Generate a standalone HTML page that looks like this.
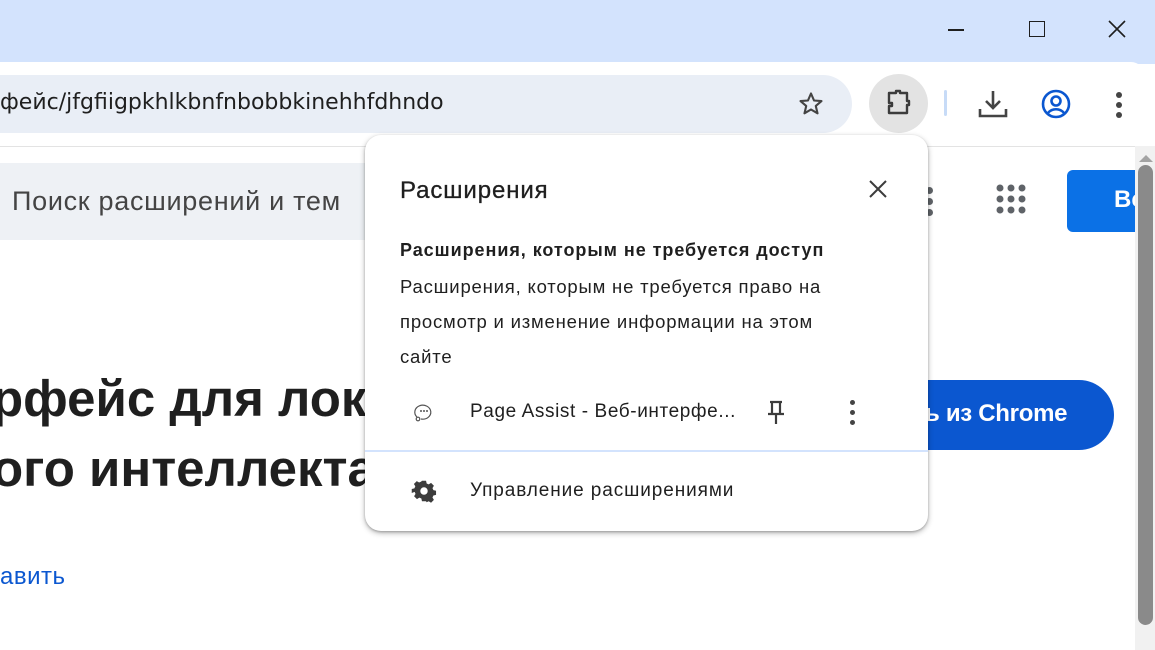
<!DOCTYPE html>
<html><head><meta charset="utf-8"><style>
body{margin:0;width:1155px;height:650px;overflow:hidden;background:#fff;font-family:"Liberation Sans","DejaVu Sans",sans-serif;position:relative}
.a{position:absolute;white-space:nowrap}
</style></head><body>
<div class="a" style="left:0;top:0;width:1155px;height:64px;background:#d3e3fd"></div>
<div class="a" style="left:0;top:62px;width:1145px;height:84px;background:#fff;border-top-right-radius:14px;border-bottom:1px solid #e3e3e3"></div>
<div class="a" style="left:948px;top:29px;width:16px;height:1.5px;background:#1f1f1f"></div>
<div class="a" style="left:1029px;top:21px;width:14px;height:14px;border:1.5px solid #1f1f1f"></div>
<svg class="a" style="left:1107px;top:19px" width="20" height="20"><path d="M2 2L18 18M18 2L2 18" stroke="#1f1f1f" stroke-width="1.6"/></svg>
<div class="a" style="left:-30px;top:75px;width:882px;height:58px;background:#e9eef6;border-radius:29px"></div>
<div class="a" style="left:0;top:90px;font-size:22px;color:#1f1f1f;font-family:'DejaVu Sans',sans-serif;letter-spacing:0px">фейс/jfgfiigpkhlkbnfnbobbkinehhfdhndo</div>
<svg class="a" style="left:797px;top:90px" width="28" height="28" viewBox="0 0 24 24"><path d="M12 3l2.6 6 6.4.5-4.9 4.2 1.5 6.3L12 16.7 6.4 20l1.5-6.3L3 9.5l6.4-.5z" fill="none" stroke="#444" stroke-width="1.8" stroke-linejoin="round"/></svg>
<div class="a" style="left:869px;top:74px;width:59px;height:59px;border-radius:50%;background:#e3e3e3"></div>
<svg class="a" style="left:884px;top:88px" width="30" height="30" viewBox="0 0 30 30"><path d="M5 5h7v-2h4v2h7v8h2v4h-2v8H5v-7h3v-3H5z" fill="none" stroke="#3c3c3c" stroke-width="2.4" stroke-linejoin="round"/></svg>
<div class="a" style="left:944px;top:90px;width:3px;height:26px;background:#c7dbf7;border-radius:2px"></div>
<svg class="a" style="left:977px;top:89px" width="32" height="30" viewBox="0 0 32 30"><path d="M16 2v17M9 12l7 7 7-7M3 20v7h26v-7" fill="none" stroke="#444" stroke-width="2.6"/></svg>
<svg class="a" style="left:1040px;top:88px" width="32" height="32" viewBox="0 0 32 32"><circle cx="16" cy="16" r="13" fill="none" stroke="#0b57d0" stroke-width="2.6"/><circle cx="16" cy="13" r="4.5" fill="none" stroke="#0b57d0" stroke-width="2.6"/><path d="M8 25c4-5 12-5 16 0" fill="none" stroke="#0b57d0" stroke-width="2.6"/></svg>
<div class="a" style="left:1116px;top:92px;width:6px;height:6px;border-radius:50%;background:#444;box-shadow:0 10px 0 #444,0 20px 0 #444"></div>
<div class="a" style="left:0;top:163px;width:380px;height:77px;background:#eef1f5;border-radius:0 8px 8px 0"></div>
<div class="a" style="left:12px;top:186px;font-size:27px;color:#444;letter-spacing:0.7px">Поиск расширений и тем</div>
<div class="a" style="left:926px;top:187px;width:7px;height:7px;border-radius:50%;background:#5f6368;box-shadow:0 11px 0 #5f6368,0 22px 0 #5f6368"></div>
<svg class="a" style="left:995px;top:183px" width="34" height="34"><g fill="#5f6368"><circle cx="5" cy="5" r="3.5"/><circle cx="16" cy="5" r="3.5"/><circle cx="27" cy="5" r="3.5"/><circle cx="5" cy="16" r="3.5"/><circle cx="16" cy="16" r="3.5"/><circle cx="27" cy="16" r="3.5"/><circle cx="5" cy="27" r="3.5"/><circle cx="16" cy="27" r="3.5"/><circle cx="27" cy="27" r="3.5"/></g></svg>
<div class="a" style="left:1067px;top:170px;width:70px;height:62px;background:#0b71e6;border-radius:6px 0 0 6px;overflow:hidden"><span style="position:absolute;left:47px;top:16px;color:#fff;font-weight:bold;font-size:24px">Вс</span></div>
<div class="a" style="left:-8px;top:364px;font-size:51px;font-weight:bold;color:#1f1f1f;line-height:70px">рфейс для локал<br>ого интеллекта</div>
<div class="a" style="left:880px;top:380px;width:234px;height:70px;background:#0b57d0;border-radius:35px"></div>
<div class="a" style="left:925px;top:400px;font-size:24px;color:#fff;font-weight:bold;letter-spacing:-0.3px">ь из Chrome</div>
<div class="a" style="left:0;top:563px;font-size:24px;color:#0b57d0;letter-spacing:0.5px">авить</div>
<div class="a" style="left:1135px;top:146px;width:20px;height:504px;background:#f1f1f1"></div>
<svg class="a" style="left:1138px;top:153px" width="16" height="10"><path d="M1 9L8 2 15 9z" fill="#a3a3a3"/></svg>
<div class="a" style="left:1138px;top:165px;width:15px;height:460px;background:#8a8a8a;border-radius:8px"></div>
<div class="a" style="left:365px;top:135px;width:563px;height:396px;background:#fff;border-radius:16px;box-shadow:0 2px 6px rgba(0,0,0,.3),0 1px 2px rgba(0,0,0,.2)"></div>
<div class="a" style="left:400px;top:177px;font-size:24px;color:#1f1f1f;letter-spacing:0.9px;-webkit-text-stroke:0.3px #1f1f1f">Расширения</div>
<svg class="a" style="left:868px;top:179px" width="20" height="20"><path d="M2 2L18 18M18 2L2 18" stroke="#3c3c3c" stroke-width="2"/></svg>
<div class="a" style="left:400px;top:240px;font-size:18px;font-weight:bold;color:#1f1f1f;letter-spacing:0.95px">Расширения, которым не требуется доступ</div>
<div class="a" style="left:400px;top:269px;font-size:18.5px;color:#1f1f1f;line-height:35px;width:470px;white-space:normal;letter-spacing:0.8px">Расширения, которым не требуется право на просмотр и изменение информации на этом сайте</div>
<svg class="a" style="left:413px;top:401px" width="22" height="22" viewBox="0 0 22 22"><path d="M4 16A8 7 0 1 1 8 18" fill="none" stroke="#555" stroke-width="1.2"/><circle cx="5" cy="18" r="1.8" fill="none" stroke="#555" stroke-width="1.2"/><g fill="#555"><circle cx="8" cy="10" r="1"/><circle cx="11" cy="10" r="1"/><circle cx="14" cy="10" r="1"/></g></svg>
<div class="a" style="left:470px;top:401px;font-size:19px;color:#1f1f1f;letter-spacing:0.6px">Page Assist - Веб-интерфе...</div>
<svg class="a" style="left:764px;top:398px" width="24" height="30" viewBox="0 0 24 30"><path d="M6 4h12M8 4v11M16 4v11M4 16h16M12 16v10" fill="none" stroke="#3c3c3c" stroke-width="2.2"/></svg>
<div class="a" style="left:850px;top:400px;width:5px;height:5px;border-radius:50%;background:#444;box-shadow:0 10px 0 #444,0 20px 0 #444"></div>
<div class="a" style="left:365px;top:450px;width:563px;height:2px;background:#d3e3fd"></div>
<svg class="a" style="left:410px;top:477px" width="28" height="28" viewBox="0 0 24 24"><path d="M10 2h4l.6 2.6 2 .9 2.3-1.4 2.8 2.8-1.4 2.3.9 2 2.6.6v4l-2.6.6-.9 2 1.4 2.3-2.8 2.8-2.3-1.4-2 .9L14 22h-4l-.6-2.6-2-.9-2.3 1.4-2.8-2.8 1.4-2.3-.9-2L0 14v-4l2.6-.6.9-2L2.1 5.1 4.9 2.3l2.3 1.4 2-.9z" fill="#3c3c3c" transform="translate(1.5 1.5) scale(.875)"/><circle cx="12" cy="12" r="3.2" fill="#fff"/></svg>
<div class="a" style="left:470px;top:480px;font-size:19px;color:#1f1f1f;letter-spacing:0.9px">Управление расширениями</div>
</body></html>
